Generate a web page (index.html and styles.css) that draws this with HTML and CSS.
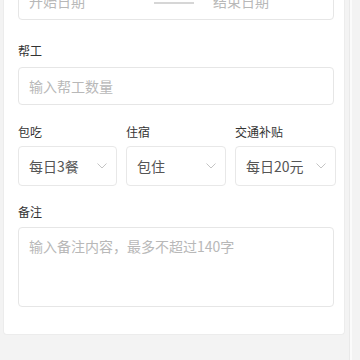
FILE: index.html
```html
<!DOCTYPE html>
<html lang="zh">
<head>
<meta charset="utf-8">
<link rel="stylesheet" href="styles.css">
</head>
<body>
<div class="page">
  <div class="card">
    <div class="range">
      <span class="ph">开始日期</span>
      <span class="sep"></span>
      <span class="ph end">结束日期</span>
    </div>

    <div class="field first">
      <div class="label">帮工</div>
      <div class="input"><span class="ph">输入帮工数量</span></div>
    </div>

    <div class="grid">
      <div class="field">
        <div class="label">包吃</div>
        <div class="select"><span class="val">每日3餐</span><svg class="chev" viewBox="0 0 10 6"><path d="M0.5 0.5 L5 5 L9.5 0.5" /></svg></div>
      </div>
      <div class="field">
        <div class="label">住宿</div>
        <div class="select"><span class="val">包住</span><svg class="chev" viewBox="0 0 10 6"><path d="M0.5 0.5 L5 5 L9.5 0.5" /></svg></div>
      </div>
      <div class="field">
        <div class="label">交通补贴</div>
        <div class="select"><span class="val">每日20元</span><svg class="chev" viewBox="0 0 10 6"><path d="M0.5 0.5 L5 5 L9.5 0.5" /></svg></div>
      </div>
    </div>

    <div class="field notes">
      <div class="label">备注</div>
      <div class="textarea"><span class="ph">输入备注内容，最多不超过140字</span></div>
    </div>
  </div>
</div>
</body>
</html>
```

FILE: styles.css
```css
html, body {
  margin: 0;
  padding: 0;
}
body {
  width: 360px;
  height: 360px;
  overflow: hidden;
  background: #f3f3f3;
  font-family: "Noto Sans CJK SC", "Noto Sans", sans-serif;
  color: #333;
}
.page {
  display: flex;
  padding-left: 3px;
  height: 360px;
  align-items: flex-start;
}
.card {
  width: 342px;
  box-sizing: border-box;
  margin-top: -40px;
  padding: 22px 10px 27px 14px;
  background: #fff;
  border: 1px solid #ececec;
  border-top: none;
  border-radius: 0 0 4px 4px;
}
.page::after {
  content: "";
  width: 2px;
  height: 360px;
  margin-left: 4px;
  background: #fbfbfb;
  border-left: 1px solid #e9e9e9;
}
.range {
  height: 38px;
  box-sizing: border-box;
  border: 1px solid #e6e6e6;
  border-radius: 4px;
  display: flex;
  align-items: center;
  padding-left: 10px;
}
.ph {
  color: #b8b8b8;
  font-size: 14px;
}
.sep {
  width: 40px;
  height: 2px;
  background: #d6d6d6;
  margin: 3px 0 0 69px;
}
.end {
  margin-left: 19px;
}
.field {
  display: flex;
  flex-direction: column;
}
.field.first {
  margin-top: 23px;
}
.label {
  font-size: 12px;
  line-height: 16px;
  height: 16px;
  color: #333;
  margin-bottom: 8px;
}
.input {
  height: 38px;
  box-sizing: border-box;
  border: 1px solid #e6e6e6;
  border-radius: 4px;
  display: flex;
  align-items: center;
  padding-left: 10px;
}
.grid {
  display: grid;
  grid-template-columns: 99px 100px 101px;
  column-gap: 9px;
  margin-top: 19px;
}
.grid .label {
  margin-bottom: 6px;
}
.select {
  height: 40px;
  box-sizing: border-box;
  border: 1px solid #e8e8e8;
  border-radius: 4px;
  display: flex;
  align-items: center;
  justify-content: space-between;
  padding: 0 9px 0 10px;
}
.val {
  font-size: 14px;
  color: #555;
}
.chev {
  width: 10px;
  height: 6px;
  fill: none;
  stroke: #c4c4c4;
  stroke-width: 1;
}
.field.notes {
  margin-top: 18px;
}
.notes .label {
  margin-bottom: 7px;
}
.textarea {
  height: 80px;
  box-sizing: border-box;
  border: 1px solid #e6e6e6;
  border-radius: 4px;
  padding: 7px 10px;
  line-height: 20px;
}
```
